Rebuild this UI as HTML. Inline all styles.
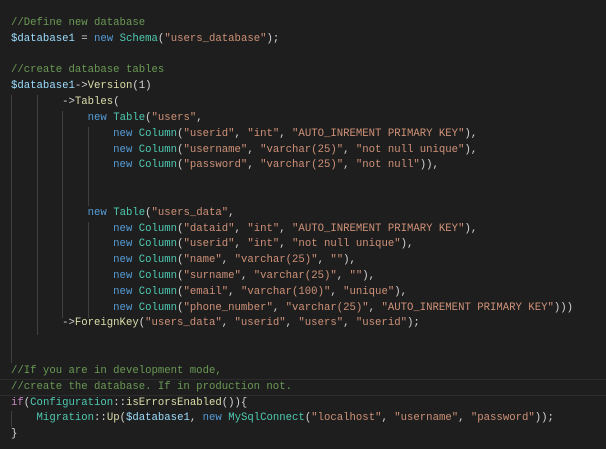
<!DOCTYPE html>
<html><head><meta charset="utf-8"><style>
html,body{margin:0;padding:0;background:#1e1e1e;width:606px;height:449px;overflow:hidden}
#c{position:absolute;left:11px;top:16px;font-family:"Liberation Mono",monospace;font-size:10.65px;line-height:15.82px;color:#d4d4d4;white-space:pre;margin:0}
.cm{color:#6a9955}.v{color:#9cdcfe}.k{color:#569cd6}.t{color:#4ec9b0}.s{color:#ce9178}.f{color:#dcdcaa}.p{color:#c586c0}
.g{position:absolute;width:1px;background:#404040}
.cur{position:absolute;left:0;width:606px;top:379px;height:15px;border-top:1px solid #2c2c2c;border-bottom:1px solid #2c2c2c}
</style></head><body>
<div class="cur"></div>
<div class="g" style="left:11px;top:95px;height:268px"></div>
<div class="g" style="left:37px;top:95px;height:240px"></div>
<div class="g" style="left:62px;top:111px;height:207px"></div>
<div class="g" style="left:88px;top:127px;height:79px"></div>
<div class="g" style="left:88px;top:222px;height:96px"></div>
<div class="g" style="left:11px;top:411px;height:16px"></div>
<pre id="c"><span class="cm">//Define new database</span>
<span class="v">$database1</span> = <span class="k">new</span> <span class="t">Schema</span>(<span class="s">"users_database"</span>);

<span class="cm">//create database tables</span>
<span class="v">$database1</span>-&gt;<span class="f">Version</span>(1)
        -&gt;<span class="f">Tables</span>(
            <span class="k">new</span> <span class="t">Table</span>(<span class="s">"users"</span>,
                <span class="k">new</span> <span class="t">Column</span>(<span class="s">"userid"</span>, <span class="s">"int"</span>, <span class="s">"AUTO_INREMENT PRIMARY KEY"</span>),
                <span class="k">new</span> <span class="t">Column</span>(<span class="s">"username"</span>, <span class="s">"varchar(25)"</span>, <span class="s">"not null unique"</span>),
                <span class="k">new</span> <span class="t">Column</span>(<span class="s">"password"</span>, <span class="s">"varchar(25)"</span>, <span class="s">"not null"</span>)),


            <span class="k">new</span> <span class="t">Table</span>(<span class="s">"users_data"</span>,
                <span class="k">new</span> <span class="t">Column</span>(<span class="s">"dataid"</span>, <span class="s">"int"</span>, <span class="s">"AUTO_INREMENT PRIMARY KEY"</span>),
                <span class="k">new</span> <span class="t">Column</span>(<span class="s">"userid"</span>, <span class="s">"int"</span>, <span class="s">"not null unique"</span>),
                <span class="k">new</span> <span class="t">Column</span>(<span class="s">"name"</span>, <span class="s">"varchar(25)"</span>, <span class="s">""</span>),
                <span class="k">new</span> <span class="t">Column</span>(<span class="s">"surname"</span>, <span class="s">"varchar(25)"</span>, <span class="s">""</span>),
                <span class="k">new</span> <span class="t">Column</span>(<span class="s">"email"</span>, <span class="s">"varchar(100)"</span>, <span class="s">"unique"</span>),
                <span class="k">new</span> <span class="t">Column</span>(<span class="s">"phone_number"</span>, <span class="s">"varchar(25)"</span>, <span class="s">"AUTO_INREMENT PRIMARY KEY"</span>)))
        -&gt;<span class="f">ForeignKey</span>(<span class="s">"users_data"</span>, <span class="s">"userid"</span>, <span class="s">"users"</span>, <span class="s">"userid"</span>);


<span class="cm">//If you are in development mode,</span>
<span class="cm">//create the database. If in production not.</span>
<span class="p">if</span>(<span class="t">Configuration</span>::<span class="f">isErrorsEnabled</span>()){
    <span class="t">Migration</span>::<span class="f">Up</span>(<span class="v">$database1</span>, <span class="k">new</span> <span class="t">MySqlConnect</span>(<span class="s">"localhost"</span>, <span class="s">"username"</span>, <span class="s">"password"</span>));
}</pre>
</body></html>
